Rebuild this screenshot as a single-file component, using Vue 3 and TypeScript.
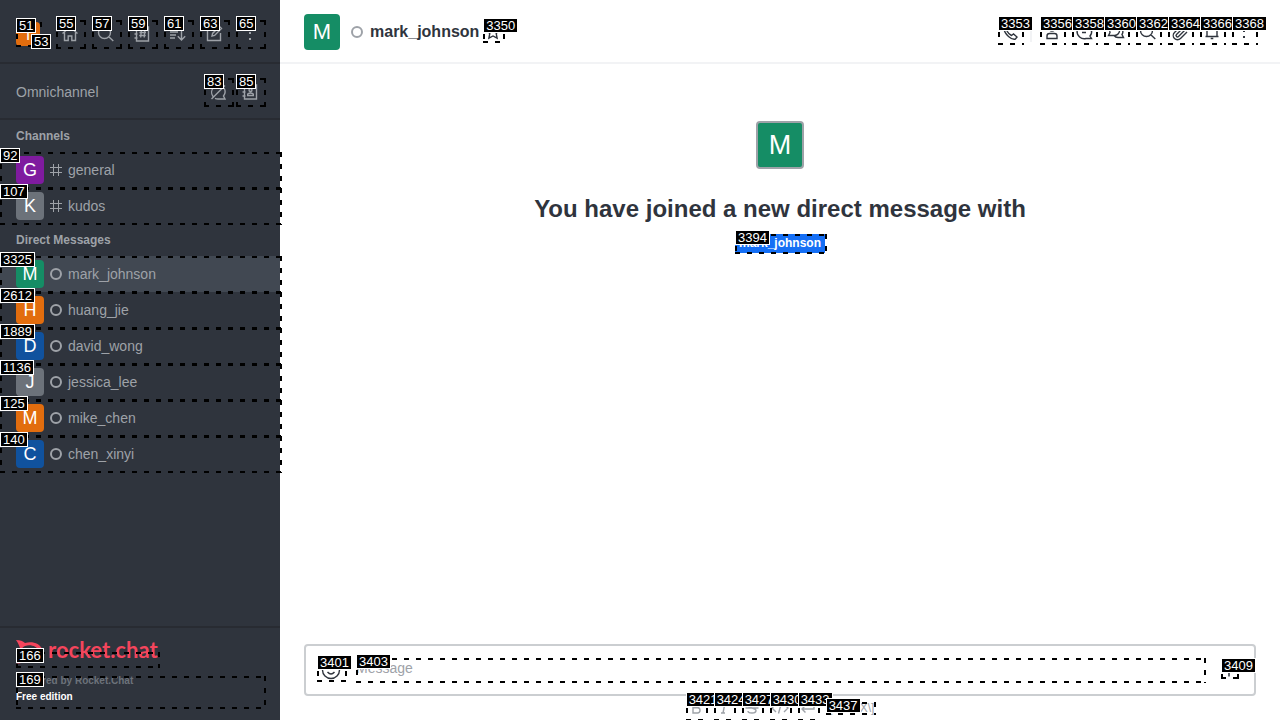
<script setup lang="ts">
import { ref } from 'vue'

interface Action {
  id: string
  label: string
  path: string
}

interface Room {
  id: string
  name: string
  tone: string
  kind: 'channel' | 'direct'
  active?: boolean
}

const book = 'M4.5 3h12v14h-12zM2.5 6h3M2.5 10h3M2.5 14h3'
const magnifier = 'M14.5 8.5a6 6 0 1 1-12 0a6 6 0 0 1 12 0zM12.8 12.8L17.3 17'
const kebab = 'M9.7 3.2h.6v.6h-.6zM9.7 8.7h.6v.6h-.6zM9.7 14.7h.6v.6h-.6z'

const tools: Action[] = [
  { id: '55', label: 'Home', path: 'M2.5 9.5L10 3l7.5 6.5M4.5 8.5v8h3.7v-4.5h3.6v4.5h3.7v-8' },
  { id: '57', label: 'Search', path: magnifier },
  { id: '59', label: 'Directory', path: book + 'M9.3 6.5l-.6 7M12.8 6.5l-.6 7M7.5 8.5h6.5M7.2 11.5h6.5' },
  { id: '61', label: 'Sort', path: 'M2 5h8M2 8h8M2 11h6M2 14h5M13.5 4v12M9.8 12.3l3.7 3.7l3.7-3.7' },
  { id: '63', label: 'Create new', path: 'M11 3.5H3.5v13h13V9M8 12l.6-2.6L15.5 2.5l2 2L10.6 11.4z' },
  { id: '65', label: 'Options', path: kebab },
]

const omniTools: Action[] = [
  { id: '83', label: 'Turn on answer chats', path: 'M5 14.5a7 7 0 0 1 9.5-10M16 6a7 7 0 0 1-.5 8l1.5 3h-7a7 7 0 0 1-3-.7M3.5 17L17 3.5' },
  { id: '85', label: 'Contact center', path: book + 'M12 8a1.500 1.500 0 1 1-3 0a1.500 1.500 0 0 1 3 0zM7.700 13.500v-1.500q2.800-2 5.600 0v1.500z' },
]

const sections: { title: string; rooms: Room[] }[] = [
  {
    title: 'Channels',
    rooms: [
      { id: '92', name: 'general', tone: 'purple', kind: 'channel' },
      { id: '107', name: 'kudos', tone: 'gray', kind: 'channel' },
    ],
  },
  {
    title: 'Direct Messages',
    rooms: [
      { id: '3325', name: 'mark_johnson', tone: 'green', kind: 'direct', active: true },
      { id: '2612', name: 'huang_jie', tone: 'orange', kind: 'direct' },
      { id: '1889', name: 'david_wong', tone: 'blue', kind: 'direct' },
      { id: '1136', name: 'jessica_lee', tone: 'gray', kind: 'direct' },
      { id: '125', name: 'mike_chen', tone: 'orange', kind: 'direct' },
      { id: '140', name: 'chen_xinyi', tone: 'blue', kind: 'direct' },
    ],
  },
]

const roomActions: Action[] = [
  { id: '3356', label: 'User info', path: 'M13 6a3 3 0 1 1-6 0a3 3 0 0 1 6 0zM5 16.5v-2.5q0-2.5 2.5-2.5h5q2.5 0 2.5 2.5v2.5z' },
  { id: '3358', label: 'Threads', path: 'M16 14a7.3 7.3 0 1 0-4 2.5h5.5zM7 7.500h6M8 10.5h4' },
  { id: '3360', label: 'Discussion', path: 'M2.500 13.500l1.500-3a5 5 0 1 1 4.500 3zM15 6.500a4.500 4.500 0 0 1 1 6l1.500 3h-5.500a5 5 0 0 1-4-2' },
  { id: '3362', label: 'Search messages', path: magnifier },
  { id: '3364', label: 'Files', path: 'M13.500 5.500l-7 7a1.400 1.400 0 0 0 2 2l7.500-7.500a2.600 2.600 0 0 0-4-4l-7.500 7.500a4 4 0 0 0 6 6l6.500-6.500' },
  { id: '3366', label: 'Notifications', path: 'M3.500 14.500h13M5 14.500V8a5 5 0 0 1 10 0v6.500M8.700 16.500h2.600' },
  { id: '3368', label: 'More options', path: kebab },
]

const formatTools: Action[] = [
  { id: '3421', label: 'Bold', path: 'M7 5h4q2.500 0 2.500 2.300T11 9.700H7zM7 9.700h4.500q2.500 0 2.500 2.600T11.500 15H7z' },
  { id: '3424', label: 'Italic', path: 'M9 5h4M7 15h4M11 5L9 15' },
  { id: '3427', label: 'Strike', path: 'M14 6.500q-1-2-4-2t-4 2.500q0 2 4 3t4 2.500q0 2.500-4 2.500t-4-2M3.500 10h13' },
  { id: '3430', label: 'Code', path: 'M6 6l-4 4l4 4M14 6l4 4l-4 4M11.500 4.500l-3 11' },
  { id: '3433', label: 'Multiline', path: 'M16 5v6H4M7.500 7.500L4 11l3.500 3.500' },
]

const message = ref('')
</script>

<template>
  <div class="app">
    <aside class="sidebar">
      <div class="toolbar">
        <button class="avatar small orange anchor" aria-label="User menu">
          T
          <span class="mark"><b>51</b></span>
          <span class="presence"><span class="mark"><b>53</b></span></span>
        </button>
        <div class="tools">
          <button v-for="t in tools" :key="t.id" class="tool anchor" :aria-label="t.label">
            <svg class="icon" viewBox="0 0 20 20"><path :d="t.path" /></svg>
            <span class="mark"><b>{{ t.id }}</b></span>
          </button>
        </div>
      </div>

      <div class="omni">
        <span>Omnichannel</span>
        <div class="omni-tools">
          <button v-for="t in omniTools" :key="t.id" class="tool anchor" :aria-label="t.label">
            <svg class="icon" viewBox="0 0 20 20"><path :d="t.path" /></svg>
            <span class="mark"><b>{{ t.id }}</b></span>
          </button>
        </div>
      </div>

      <nav class="rooms">
        <section v-for="s in sections" :key="s.title">
          <h2>{{ s.title }}</h2>
          <a v-for="r in s.rooms" :key="r.id" href="#" class="room anchor" :class="{ active: r.active }">
            <span class="avatar medium" :class="r.tone">{{ r.name[0].toUpperCase() }}</span>
            <svg v-if="r.kind === 'channel'" class="glyph" viewBox="0 0 12 12">
              <path d="M3.500 0v12M8.500 0v12M0 3.500h12M0 8.500h12" stroke-width="1" />
            </svg>
            <svg v-else class="glyph" viewBox="0 0 12 12"><circle cx="6" cy="6" r="5" stroke-width="2" /></svg>
            <span>{{ r.name }}</span>
            <span class="mark"><b>{{ r.id }}</b></span>
          </a>
        </section>
      </nav>

      <footer class="brand">
        <a href="#" class="logo" aria-label="Rocket.Chat">
          <svg class="rocket" viewBox="0 0 28 24">
            <path d="M0 0C4 0 7 1 9 3C17 1 24 4 26 9C28 13 26 18 21 20C17 22 12 22 9 21C6 23 3 24 0 23C3 20 3 18 3 16C1 13 2 10 4 8C3 5 2 3 0 0ZM9 6C5 8 4 11 5 14C6 18 12 19 17 18C22 17 24 14 23 11C21 6 14 4 9 6Z" />
            <circle cx="9" cy="12" r="2" /><circle cx="14" cy="12" r="2" /><circle cx="19" cy="12" r="2" />
          </svg>
          <span class="wordmark">rocket.chat</span>
          <span class="link-area"><span class="mark"><b>166</b></span></span>
        </a>
        <div class="edition anchor">
          <p class="powered">Powered by Rocket.Chat</p>
          <p>Free edition</p>
          <span class="edition-area"><span class="mark"><b>169</b></span></span>
        </div>
      </footer>
    </aside>

    <main class="main">
      <header class="room-header">
        <span class="avatar large green">M</span>
        <svg class="status" viewBox="0 0 12 12"><circle cx="6" cy="6" r="5" /></svg>
        <h1>mark_johnson</h1>
        <button class="star anchor" aria-label="Favorite">
          <svg class="icon" viewBox="0 0 20 20"><path d="M10 3.500l2 4.300l4.500.5l-3.300 3.200l.9 4.700L10 14l-4.100 2.200l.9-4.700L3.500 8.300l4.500-.5z" /></svg>
          <span class="mark"><b>3350</b></span>
        </button>
        <div class="actions">
          <button class="action anchor" aria-label="Call">
            <svg class="icon" viewBox="0 0 20 20"><path d="M3 4.500L5.500 3l3 4l-1.500 2q1.500 3 4.500 4.500l2-1.500l3.500 3l-1.500 2q-3 1-7-2.500T3 4.500z" /></svg>
            <span class="mark"><b>3353</b></span>
          </button>
          <i class="rule"></i>
          <button v-for="a in roomActions" :key="a.id" class="action anchor" :aria-label="a.label">
            <svg class="icon" viewBox="0 0 20 20"><path :d="a.path" /></svg>
            <span class="mark"><b>{{ a.id }}</b></span>
          </button>
        </div>
      </header>

      <section class="intro">
        <span class="avatar framed green">M</span>
        <h2>You have joined a new direct message with</h2>
        <a href="#" class="mention anchor">mark_johnson<span class="mark"><b>3394</b></span></a>
      </section>

      <form class="composer" @submit.prevent>
        <div class="box">
          <button type="button" class="emoji anchor" aria-label="Emoji">
            <svg class="icon" viewBox="0 0 20 20"><path d="M18.500 10a8.500 8.500 0 1 1-17 0a8.500 8.500 0 0 1 17 0zM6.500 12q3.500 4 7 0M7 7v1.500M13 7v1.500" /></svg>
            <span class="mark"><b>3401</b></span>
          </button>
          <label class="field anchor">
            <input v-model="message" type="text" placeholder="Message" aria-label="Message" />
            <span class="mark"><b>3403</b></span>
          </label>
          <button type="button" class="add anchor" aria-label="More actions">
            <svg class="plus" viewBox="0 0 16 16"><path d="M8 1.500v13M1.500 8h13" /></svg>
            <span class="mark"><b>3409</b></span>
          </button>
        </div>
        <div class="formats">
          <button v-for="f in formatTools" :key="f.id" type="button" class="format anchor" :aria-label="f.label">
            <svg class="icon" viewBox="0 0 20 20"><path :d="f.path" /></svg>
            <span class="mark"><b>{{ f.id }}</b></span>
          </button>
          <a href="#" class="katex anchor">\[KaTeX\]<span class="mark"><b>3437</b></span></a>
        </div>
      </form>
    </main>
  </div>
</template>

<style>
html,
body {
  margin: 0;
  overflow: hidden;
}
</style>

<style scoped>
* {
  box-sizing: border-box;
}
.app {
  display: flex;
  height: 100vh;
  overflow: hidden;
  font-family: "Liberation Sans", Arial, sans-serif;
  font-size: 14px;
  color: #2f343d;
  background: #fff;
}
button {
  border: 0;
  padding: 0;
  background: none;
  color: inherit;
  font-family: inherit;
}
a {
  color: inherit;
  text-decoration: none;
}
h1,
h2,
p {
  margin: 0;
}
svg {
  display: block;
  flex: none;
  fill: none;
  stroke: currentColor;
}
.icon {
  width: 20px;
  height: 20px;
  stroke-width: 1.4;
}
.anchor {
  position: relative;
}

/* Dashed outline with a number tag, laid over an interactive element */
.mark {
  position: absolute;
  z-index: 1;
  inset: 0 -2px -1px 0;
  pointer-events: none;
  background:
    repeating-linear-gradient(90deg, #000 0 5px, transparent 5px 12px) 0 0 / 100% 2px no-repeat,
    repeating-linear-gradient(90deg, #000 0 5px, transparent 5px 12px) 0 100% / 100% 2px no-repeat,
    repeating-linear-gradient(180deg, #000 0 5px, transparent 5px 12px) 0 0 / 2px 100% no-repeat,
    repeating-linear-gradient(180deg, #000 0 5px, transparent 5px 12px) 100% 0 / 2px 100% no-repeat;
}
.mark b {
  position: absolute;
  top: -4px;
  left: 0;
  padding: 0 2px;
  border: 1px solid #fff;
  background: #000;
  color: #fff;
  font: 400 13px/13px "Liberation Sans", Arial, sans-serif;
}

.avatar {
  display: flex;
  flex: none;
  align-items: center;
  justify-content: center;
  border-radius: 4px;
  color: #fff;
}
.small {
  width: 24px;
  height: 24px;
  font-size: 15px;
}
.medium {
  width: 28px;
  height: 28px;
  font-size: 18px;
}
.large {
  width: 36px;
  height: 36px;
  font-size: 22px;
}
.framed {
  width: 48px;
  height: 48px;
  border: 2px solid #9ea2a8;
  font-size: 27px;
}
.green { background: #158d65; }
.orange { background: #e26d0e; }
.blue { background: #10529e; }
.gray { background: #6c727a; }
.purple { background: #7f1b9f; }

.sidebar {
  position: relative;
  z-index: 2;
  display: flex;
  flex: none;
  flex-direction: column;
  width: 280px;
  background: #2f343d;
  color: #9ea2a8;
}
.toolbar,
.omni {
  display: flex;
  align-items: center;
  justify-content: space-between;
  border-bottom: 2px solid #282b32;
}
.toolbar {
  padding: 20px 16px 14px;
}
.omni {
  padding: 14px 16px 12px;
}
.tools {
  display: flex;
  gap: 8px;
}
.omni-tools {
  display: flex;
  gap: 4px;
}
.tool {
  display: grid;
  place-items: center;
  width: 28px;
  height: 28px;
}
.presence {
  position: absolute;
  left: 15px;
  top: 16px;
  width: 8px;
  height: 8px;
}
.rooms {
  flex: 1;
}
.rooms h2 {
  padding: 0 16px;
  font-size: 12px;
  line-height: 32px;
}
.room {
  display: flex;
  align-items: center;
  gap: 6px;
  height: 36px;
  padding: 0 16px;
}
.room.active {
  background: #414852;
}
.glyph {
  width: 12px;
  height: 12px;
}
.brand {
  padding: 12px 16px 13px;
  border-top: 2px solid #282b32;
  color: #fff;
}
.logo {
  position: relative;
  display: flex;
  gap: 4px;
  width: 142px;
  height: 24px;
  color: #f5455c;
}
.rocket {
  width: 28px;
  height: 24px;
  fill: currentColor;
  fill-rule: evenodd;
  stroke: none;
}
.wordmark {
  font: 700 22px/20px Lato, sans-serif;
}
.link-area {
  position: absolute;
  inset: 12px 0 -3px 0;
}
.edition {
  margin-top: 9px;
  padding-bottom: 2px;
  font-size: 10px;
  font-weight: 700;
  line-height: 16px;
}
.edition-area {
  position: absolute;
  inset: 3px 0 -1px 0;
}
.powered {
  color: #6c727a;
}

.main {
  display: flex;
  flex: 1;
  flex-direction: column;
  min-width: 0;
}
.room-header {
  display: flex;
  align-items: center;
  height: 64px;
  padding: 2px 24px 0;
  border-bottom: 2px solid #f2f3f5;
}
.status {
  width: 12px;
  height: 12px;
  margin: 0 7px 0 11px;
  stroke: #9ea2a8;
  stroke-width: 2;
}
.room-header h1 {
  font-size: 16px;
  line-height: 24px;
}
.star {
  width: 20px;
  height: 20px;
  margin-left: 4px;
}
.actions {
  display: flex;
  align-items: center;
  gap: 8px;
  margin-left: auto;
}
.action {
  display: grid;
  place-items: center;
  width: 24px;
  height: 24px;
}
.rule {
  width: 2px;
  height: 20px;
  background: #f2f3f5;
}
.intro {
  display: flex;
  flex: 1;
  flex-direction: column;
  align-items: center;
  padding: 57px 24px 0;
}
.intro h2 {
  margin: 24px 0 9px;
  font-size: 24px;
  line-height: 32px;
}
.mention {
  padding: 0 4px;
  background: #156ff5;
  color: #fff;
  font-size: 12px;
  font-weight: 700;
  line-height: 19px;
}
.composer {
  padding: 0 24px;
}
.box {
  display: flex;
  align-items: center;
  height: 52px;
  padding: 0 17px 0 11px;
  border: 2px solid #cbced1;
  border-radius: 4px;
}
.emoji {
  display: grid;
  place-items: center;
  width: 28px;
  height: 22px;
}
.field {
  flex: 1;
  height: 24px;
  margin: 0 17px 0 11px;
}
.field input {
  display: block;
  width: 100%;
  height: 20px;
  padding: 0;
  border: 0;
  outline: 0;
  background: none;
  font: 14px/20px "Liberation Sans", Arial, sans-serif;
}
.field input::placeholder {
  color: #9ea2a8;
  opacity: 1;
}
.add {
  width: 16px;
  height: 16px;
}
.plus {
  width: 16px;
  height: 16px;
  stroke-width: 1.5;
}
.formats {
  display: flex;
  align-items: center;
  justify-content: center;
  gap: 8px;
  height: 24px;
  color: #9ea2a8;
}
.format {
  display: grid;
  place-items: center;
  width: 20px;
  height: 24px;
}
.katex {
  font-size: 12px;
  line-height: 12px;
}
</style>
